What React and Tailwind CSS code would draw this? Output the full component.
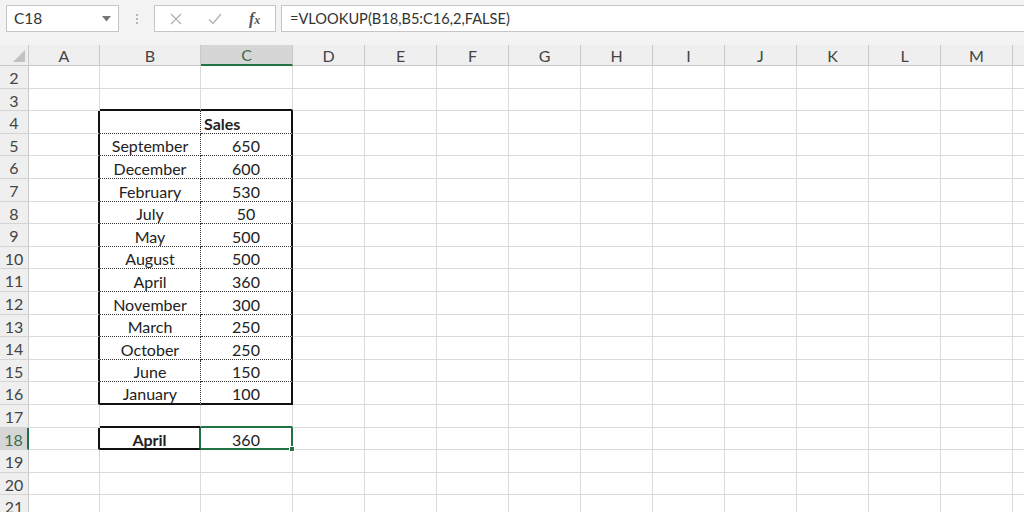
import React from 'react'

const COLS = [
  { k: 'A', w: 'w-[71px]' },
  { k: 'B', w: 'w-[101px]' },
  { k: 'C', w: 'w-[92px]' },
  { k: 'D', w: 'w-[72px]' },
  { k: 'E', w: 'w-[72px]' },
  { k: 'F', w: 'w-[72px]' },
  { k: 'G', w: 'w-[72px]' },
  { k: 'H', w: 'w-[72px]' },
  { k: 'I', w: 'w-[72px]' },
  { k: 'J', w: 'w-[72px]' },
  { k: 'K', w: 'w-[72px]' },
  { k: 'L', w: 'w-[72px]' },
  { k: 'M', w: 'w-[72px]' },
  { k: 'N', w: 'w-[72px]' },
]

const SALES = [
  ['September', 650],
  ['December', 600],
  ['February', 530],
  ['July', 50],
  ['May', 500],
  ['August', 500],
  ['April', 360],
  ['November', 300],
  ['March', 250],
  ['October', 250],
  ['June', 150],
  ['January', 100],
]

const top = (r) => 66 + Math.round((r - 2) * 22.6)
const ROWS = Array.from({ length: 20 }, (_, i) => i + 2)

function cellText(r, c) {
  if (r === 4 && c === 'C') return { t: 'Sales', bold: true, left: true }
  if (r >= 5 && r <= 16) {
    const [m, v] = SALES[r - 5]
    if (c === 'B') return { t: m }
    if (c === 'C') return { t: v }
  }
  if (r === 18 && c === 'B') return { t: 'April', bold: true }
  if (r === 18 && c === 'C') return { t: 360 }
  return null
}

function rightBorder(r, c) {
  const inTable = r >= 4 && r <= 16
  if (c === 'A' && (inTable || r === 18)) return '[border-right:2px_solid_#111]'
  if (c === 'B' && inTable) return '[border-right:1px_dotted_#333]'
  if ((c === 'B' || c === 'C') && r === 18) return '[border-right:2px_solid_#217346]'
  if (c === 'C' && inTable) return '[border-right:2px_solid_#111]'
  return '[border-right:1px_solid_#dadada]'
}

function bottomBorder(r, c) {
  const bc = c === 'B' || c === 'C'
  if (bc && (r === 3 || r === 16)) return '[border-bottom:2px_solid_#111]'
  if (bc && r >= 4 && r <= 15) return '[border-bottom:1px_dotted_#333]'
  if (c === 'B' && (r === 17 || r === 18)) return '[border-bottom:2px_solid_#111]'
  if (c === 'C' && (r === 17 || r === 18)) return '[border-bottom:2px_solid_#217346]'
  return '[border-bottom:1px_solid_#dadada]'
}

function FormulaBar() {
  return (
    <div className="flex h-[45px] items-start bg-[#f3f3f3] pt-[5px] text-[15px] text-[#333]">
      {/* name box */}
      <div className="ml-[6px] flex h-[27px] w-[113px] items-center justify-between border border-[#c6c6c6] bg-white pl-[7px] pr-[7px] text-[15.5px]">
        <span>C18</span>
        <svg width="9" height="6" viewBox="0 0 9 6"><path d="M0 0h9L4.5 5.5z" fill="#777" /></svg>
      </div>
      <div className="flex h-[27px] w-[35px] flex-col items-center justify-center gap-[2px]">
        <span className="h-[2px] w-[2px] bg-[#b5b5b5]" />
        <span className="h-[2px] w-[2px] bg-[#b5b5b5]" />
        <span className="h-[2px] w-[2px] bg-[#b5b5b5]" />
      </div>
      {/* cancel / enter / fx */}
      <div className="flex h-[27px] w-[122px] items-center border border-[#c6c6c6] bg-white">
        <svg className="ml-[15px]" width="12" height="12" viewBox="0 0 12 12"><path d="M1 1l10 10M11 1L1 11" stroke="#b3b3b3" strokeWidth="1.4" /></svg>
        <svg className="ml-[26px]" width="14" height="12" viewBox="0 0 14 12"><path d="M1 6.5l4 4L13 1" stroke="#b3b3b3" strokeWidth="1.4" fill="none" /></svg>
        <span className="ml-[27px] font-['Liberation_Serif',serif] text-[16px] font-bold italic text-[#555]">f<span className="text-[12px]">x</span></span>
      </div>
      <div className="ml-[5px] flex h-[27px] flex-1 items-center border border-r-0 border-[#c6c6c6] bg-white pl-[8px] text-[14.6px]">
        =VLOOKUP(B18,B5:C16,2,FALSE)
      </div>
    </div>
  )
}

function HeaderRow() {
  return (
    <div className="flex h-[21px] bg-[#efefef] text-[16px] text-[#444]">
      <div className="relative w-[29px] shrink-0 [border-right:1px_solid_#c9c9c9] [border-bottom:1px_solid_#c9c9c9]">
        <svg className="absolute bottom-[3px] right-[3px]" width="12" height="12" viewBox="0 0 12 12"><path d="M12 0v12H0z" fill="#c2c2c2" /></svg>
      </div>
      {COLS.map((c) =>
        c.k === 'C' ? (
          <div key={c.k} className={`${c.w} flex shrink-0 items-center justify-center bg-[#d6d6d6] pt-[1px] text-[#3b6e50] [border-right:1px_solid_#c9c9c9] [border-bottom:2px_solid_#217346]`}>
            {c.k}
          </div>
        ) : (
          <div key={c.k} className={`${c.w} flex shrink-0 items-center justify-center pt-[1px] [border-right:1px_solid_#c9c9c9] [border-bottom:1px_solid_#c9c9c9]`}>
            {c.k === 'N' ? '' : c.k}
          </div>
        )
      )}
    </div>
  )
}

function Row({ r }) {
  const h = top(r + 1) - top(r) === 23 ? 'h-[23px]' : 'h-[22px]'
  const sel = r === 18
  return (
    <div className={`flex ${h}`}>
      <div className={`flex w-[29px] shrink-0 items-center justify-center pt-[2px] text-[16px] ${sel ? 'bg-[#d6d6d6] text-[#3b6e50] [border-right:2px_solid_#217346]' : 'bg-[#efefef] text-[#444] [border-right:1px_solid_#c9c9c9]'} [border-bottom:1px_solid_#d4d4d4]`}>
        {r}
      </div>
      {COLS.map((c) => {
        const t = cellText(r, c.k)
        return (
          <div
            key={c.k}
            className={`${c.w} relative flex shrink-0 items-center pt-[3px] text-[16px] text-[#222] ${t && t.left ? 'justify-start pl-[3px]' : 'justify-center'} ${t && t.bold ? 'font-bold' : ''} ${rightBorder(r, c.k)} ${bottomBorder(r, c.k)}`}
          >
            {t ? t.t : null}
            {sel && c.k === 'C' && (
              <span className="absolute -bottom-[4px] -right-[4px] z-10 h-[6px] w-[6px] border border-white bg-[#217346]" />
            )}
          </div>
        )
      })}
    </div>
  )
}

export default function App() {
  return (
    <div className="h-[512px] w-[1024px] overflow-hidden bg-white font-['Lato','Liberation_Sans',sans-serif]">
      <FormulaBar />
      <HeaderRow />
      {ROWS.map((r) => (
        <Row key={r} r={r} />
      ))}
    </div>
  )
}
